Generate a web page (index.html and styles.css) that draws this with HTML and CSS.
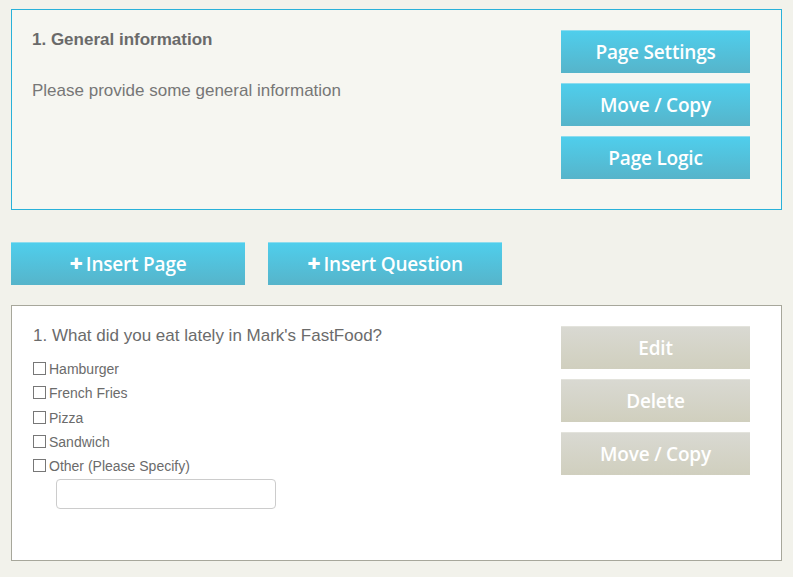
FILE: index.html
```html
<!DOCTYPE html>
<html>
<head>
<meta charset="utf-8">
<link rel="stylesheet" href="styles.css">
</head>
<body>
<div class="page">
  <section class="page-box">
    <div class="page-info">
      <h2 class="page-title">1. General information</h2>
      <p class="page-desc">Please provide some general information</p>
    </div>
    <div class="btn-col">
      <button class="btn btn-blue">Page Settings</button>
      <button class="btn btn-blue">Move / Copy</button>
      <button class="btn btn-blue">Page Logic</button>
    </div>
  </section>

  <div class="insert-row">
    <button class="btn btn-blue btn-wide"><span class="plus">+</span>Insert Page</button>
    <button class="btn btn-blue btn-wide"><span class="plus">+</span>Insert Question</button>
  </div>

  <section class="question-box">
    <div class="question">
      <div class="q-title">1. What did you eat lately in Mark's FastFood?</div>
      <ul class="options">
        <li class="option"><span class="cb"></span>Hamburger</li>
        <li class="option"><span class="cb"></span>French Fries</li>
        <li class="option"><span class="cb"></span>Pizza</li>
        <li class="option"><span class="cb"></span>Sandwich</li>
        <li class="option"><span class="cb"></span>Other (Please Specify)</li>
      </ul>
      <div class="other-input"></div>
    </div>
    <div class="btn-col">
      <button class="btn btn-gray">Edit</button>
      <button class="btn btn-gray">Delete</button>
      <button class="btn btn-gray">Move / Copy</button>
    </div>
  </section>
</div>
</body>
</html>
```

FILE: styles.css
```css
html, body {
  margin: 0;
  padding: 0;
  background: #f2f2eb;
}
body {
  font-family: "Liberation Sans", Arial, sans-serif;
  color: #666;
}
.page {
  padding: 9px 11px 0 11px;
  width: 771px;
}
.page-box {
  display: flex;
  background: #f6f6f1;
  border: 1px solid #29b1d9;
  padding: 20px 31px 30px 20px;
  height: 149px;
}
.page-info {
  flex: 1;
}
.page-title {
  margin: 0;
  font-size: 17px;
  font-weight: bold;
  line-height: 20px;
  color: #6a6a6a;
}
.page-desc {
  margin: 31px 0 0 0;
  font-size: 17px;
  line-height: 20px;
  color: #777;
}
.btn-col {
  width: 189px;
  display: flex;
  flex-direction: column;
  gap: 10px;
}
.btn {
  display: flex;
  align-items: center;
  justify-content: center;
  height: 43px;
  border: 0;
  padding: 0;
  margin: 0;
  font-family: "Open Sans", sans-serif;
  font-weight: 600;
  font-size: 19px;
  letter-spacing: -0.2px;
  color: #fff;
}
.btn-blue {
  background: linear-gradient(#4fceec, #56b4ca);
  border-top: 1px solid #8ddcee;
}
.btn-gray {
  background: linear-gradient(#d9d9d2, #d0cfbe);
  border-top: 1px solid #e3e3dc;
}
.insert-row {
  display: flex;
  gap: 23px;
  margin: 32px 0 20px 0;
}
.btn-wide {
  width: 234px;
}
.plus {
  font-weight: 800;
  font-size: 23px;
  margin-right: 3px;
  line-height: 1;
  position: relative;
  top: -1px;
}
.question-box {
  display: flex;
  background: #fff;
  border: 1px solid #a7a79b;
  padding: 20px 31px 51px 21px;
}
.question {
  flex: 1;
}
.q-title {
  font-size: 17px;
  line-height: 20px;
  color: #6b6b6b;
}
.options {
  list-style: none;
  margin: 11px 0 0 0;
  padding: 0;
}
.option {
  display: flex;
  align-items: center;
  height: 24.3px;
  font-size: 14px;
  color: #6b6b6b;
}
.cb {
  width: 11px;
  height: 11px;
  border: 1px solid #777;
  margin-right: 3px;
  margin-top: -1px;
}
.other-input {
  margin: 1px 0 0 23px;
  width: 218px;
  height: 28px;
  border: 1px solid #ccc;
  border-radius: 4px;
  background: #fff;
}
```
